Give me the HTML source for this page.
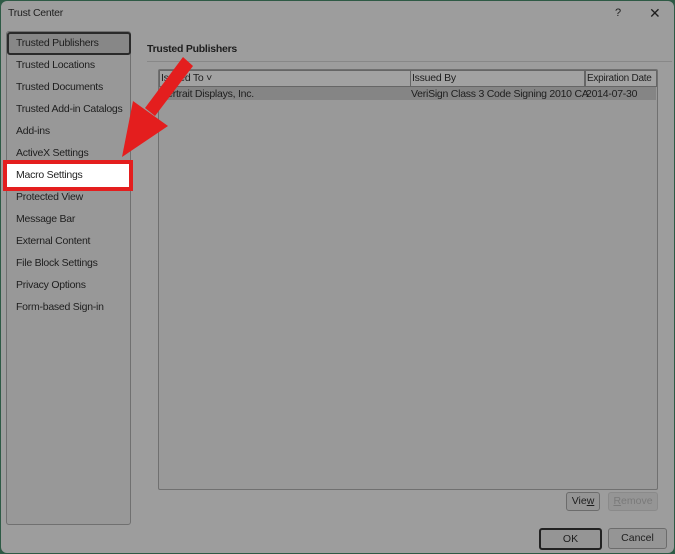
<!DOCTYPE html><html><head><style>
body{margin:0;width:675px;height:554px;background:#2e5a45;font-family:"Liberation Sans",sans-serif;overflow:hidden;position:relative}
.win{position:absolute;left:1px;top:1px;width:673px;height:552px;background:#9d9d9d;border-radius:6px}
.t{position:absolute;font-size:10.5px;letter-spacing:-0.25px;color:#1e1e1e;white-space:nowrap}
.panel{position:absolute;left:6px;top:31px;width:123px;height:492px;border:1px solid #707070;border-radius:3px;background:#989898}
.btn{position:absolute;border:1px solid #6c6c6c;border-radius:3px;background:#959595;font-size:10.5px;text-align:center;color:#1e1e1e}
</style></head><body><div class="win"></div>
<div class="t" style="left:8px;top:7px">Trust Center</div>
<div class="t" style="left:615px;top:7px;font-size:11px">?</div>
<div class="t" style="left:649px;top:5px;font-size:14px">✕</div>
<div class="panel"></div>
<div style="position:absolute;left:7px;top:32px;width:120px;height:19px;border:2px solid #2a2a2a;border-radius:3px;background:#878787"></div>
<div class="t" style="left:16px;top:37px">Trusted Publishers</div>
<div class="t" style="left:16px;top:59px">Trusted Locations</div>
<div class="t" style="left:16px;top:81px">Trusted Documents</div>
<div class="t" style="left:16px;top:103px">Trusted Add-in Catalogs</div>
<div class="t" style="left:16px;top:125px">Add-ins</div>
<div class="t" style="left:16px;top:147px">ActiveX Settings</div>
<div style="position:absolute;left:3px;top:160px;width:122px;height:23px;border:4px solid #e41e1e;background:#fff"></div>
<div class="t" style="left:16px;top:169px">Macro Settings</div>
<div class="t" style="left:16px;top:191px">Protected View</div>
<div class="t" style="left:16px;top:213px">Message Bar</div>
<div class="t" style="left:16px;top:235px">External Content</div>
<div class="t" style="left:16px;top:257px">File Block Settings</div>
<div class="t" style="left:16px;top:279px">Privacy Options</div>
<div class="t" style="left:16px;top:301px">Form-based Sign-in</div>
<div class="t" style="left:147px;top:43px;font-weight:bold">Trusted Publishers</div>
<div style="position:absolute;left:147px;top:61px;width:525px;height:1px;background:#888"></div>
<div style="position:absolute;left:158px;top:69px;width:498px;height:419px;border:1px solid #707070;border-radius:2px;background:#999"></div>
<div style="position:absolute;left:159px;top:70px;width:250px;height:15px;border:1px solid #666;background:#a2a2a2"></div>
<div style="position:absolute;left:410px;top:70px;width:173px;height:15px;border:1px solid #666;background:#a2a2a2"></div>
<div style="position:absolute;left:585px;top:70px;width:70px;height:15px;border:1px solid #666;background:#a2a2a2"></div>
<div class="t" style="left:161px;top:72px">Issued To ˅</div>
<div class="t" style="left:412px;top:72px">Issued By</div>
<div class="t" style="left:587px;top:73px;font-size:10px">Expiration Date</div>
<div style="position:absolute;left:159px;top:87px;width:497px;height:13px;background:#858585"></div>
<div class="t" style="left:161px;top:88px">Vertrait Displays, Inc.</div>
<div class="t" style="left:411px;top:88px">VeriSign Class 3 Code Signing 2010 CA</div>
<div class="t" style="left:586px;top:88px">2014-07-30</div>
<div class="btn" style="left:566px;top:492px;width:32px;height:17px;line-height:17px">Vie<u>w</u></div>
<div class="btn" style="left:608px;top:492px;width:48px;height:17px;line-height:17px;color:#7a7a7a;border-color:#8a8a8a"><u>R</u>emove</div>
<div class="btn" style="left:539px;top:528px;width:59px;height:18px;line-height:18px;border:2px solid #222">OK</div>
<div class="btn" style="left:608px;top:528px;width:57px;height:19px;line-height:19px">Cancel</div>
<svg style="position:absolute;left:0;top:0" width="675" height="554"><polygon points="183,57 193,66 155,116 145,108" fill="#e41e1e"/><polygon points="122,157 133,101 168,126" fill="#e41e1e"/></svg>
</body></html>
